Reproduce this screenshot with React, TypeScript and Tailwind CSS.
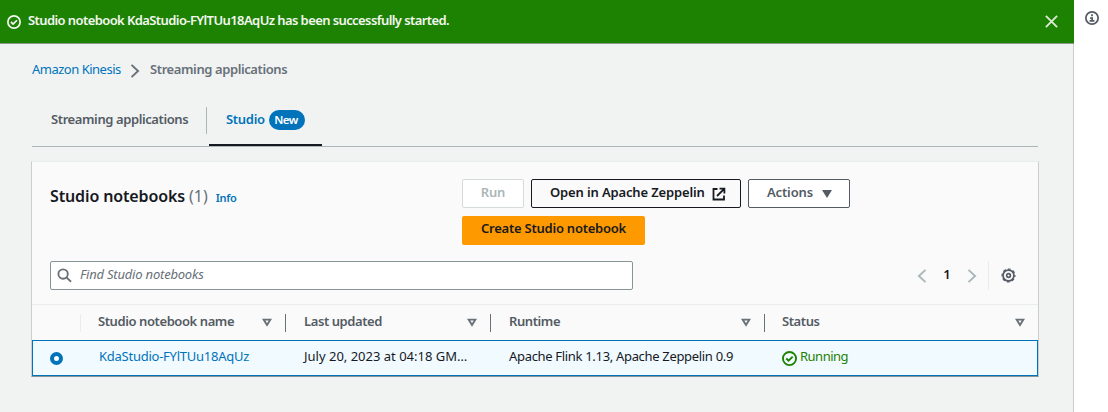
import type { ReactNode } from "react";

type IconProps = { className?: string };

function StatusIcon({ className = "" }: IconProps) {
  return (
    <svg viewBox="0 0 16 16" className={`fill-none stroke-current ${className}`} strokeWidth="2">
      <circle cx="8" cy="8" r="7" />
      <path d="M4.5 8l2.5 2.4 4.4-4.4" />
    </svg>
  );
}

function InfoIcon({ className = "" }: IconProps) {
  return (
    <svg viewBox="0 0 16 16" className={`fill-none stroke-current ${className}`} strokeWidth="2">
      <circle cx="8" cy="8" r="7" />
      <path d="M5.2 11.4h5.6M8.2 11.4V8H5.8M8 3.8v2.2" />
    </svg>
  );
}

function CloseIcon({ className = "" }: IconProps) {
  return (
    <svg viewBox="0 0 16 16" className={`fill-none stroke-current ${className}`} strokeWidth="2">
      <path d="M2 2l12 12M14 2L2 14" />
    </svg>
  );
}

function ChevronRight({ className = "" }: IconProps) {
  return (
    <svg viewBox="0 0 16 16" className={`fill-none stroke-current ${className}`} strokeWidth="2.2">
      <path d="M4 1l7.5 7L4 15" />
    </svg>
  );
}

function ChevronLeft({ className = "" }: IconProps) {
  return (
    <svg viewBox="0 0 16 16" className={`fill-none stroke-current ${className}`} strokeWidth="2.2">
      <path d="M12 1L4.5 8l7.5 7" />
    </svg>
  );
}

function SearchIcon({ className = "" }: IconProps) {
  return (
    <svg viewBox="0 0 16 16" className={`fill-none stroke-current ${className}`} strokeWidth="2">
      <circle cx="6.5" cy="6.5" r="5" />
      <path d="M10 10l5 4.6" />
    </svg>
  );
}

function ExternalIcon({ className = "" }: IconProps) {
  return (
    <svg viewBox="0 0 14 14" className={`fill-none stroke-current ${className}`} strokeWidth="1.8">
      <path d="M5.5 2H1.5v10.5H12V8.5M7.5 1.6h4.9v4.9M5 9l7.2-7.2" />
    </svg>
  );
}

function GearIcon({ className = "" }: IconProps) {
  return (
    <svg viewBox="0 0 16 16" className={`fill-none stroke-current ${className}`}>
      <circle cx="8" cy="8" r="5.8" strokeWidth="1.8" />
      <circle cx="8" cy="8" r="6.8" strokeWidth="1.4" strokeDasharray="3.1 2.24" strokeDashoffset="1.55" />
      <circle cx="8" cy="8" r="2" strokeWidth="1.8" />
    </svg>
  );
}

function SortIcon() {
  return (
    <svg viewBox="0 0 10 9" className="h-[9px] w-[10px] fill-none stroke-[#687078]" strokeWidth="1.9">
      <path d="M1.6 1.6h6.8L5 7z" />
    </svg>
  );
}

function HeaderCell({ className, children }: { className: string; children: ReactNode }) {
  return (
    <div className={`flex h-[18px] items-center justify-between pr-[13px] text-[#545b64] ${className}`}>
      <span className="mb-[3px] font-semibold tracking-[-0.41px]">{children}</span>
      <SortIcon />
    </div>
  );
}

export default function App() {
  return (
    <div className="flex h-[412px] w-[1108px] overflow-hidden bg-white font-['Noto_Sans','Open_Sans',sans-serif] text-[13px] leading-[18px] whitespace-nowrap text-[#16191f]">
      <div className="w-[1074px] border-r border-[#c8cdcd] bg-[#f1f3f3]">
        <div className="-mr-px flex h-[43px] items-center justify-between bg-[#1d8102] pr-[15px] pl-[7px] text-[#f2f8f0] shadow-[0_1px_0_0_#8c9a8c]">
          <div className="flex items-center">
            <StatusIcon className="h-[14px] w-[14px]" />
            <span className="mb-[3px] ml-[7px] font-semibold tracking-[-0.59px]">
              Studio notebook KdaStudio-FYlTUu18AqUz has been successfully started.
            </span>
          </div>
          <CloseIcon className="h-[15px] w-[15px] text-[#d9ead5]" />
        </div>

        <nav className="flex h-[53px] items-center pl-[32px]">
          <span className="mb-[2px] w-[90px] tracking-[-0.5px] text-[#0073bb]">Amazon Kinesis</span>
          <ChevronRight className="mt-[2px] mr-[8px] ml-[6px] h-[14px] w-[14px] text-[#687078]" />
          <span className="mb-[2px] font-semibold tracking-[-0.4px] text-[#687078]">Streaming applications</span>
        </nav>

        <div className="mx-[32px] mr-[35px] flex h-[51px] border-b border-[#aab7b8]">
          <div className="mt-[11px] flex h-[27px] w-[175px] items-center border-r border-[#aab7b8] pb-[3px] pl-[19px] font-semibold tracking-[-0.4px] text-[#545b64]">
            Streaming applications
          </div>
          <div className="ml-[2px] flex w-[113px] border-b-2 border-[#16191f] pt-[14px] pl-[17px]">
            <span className="w-[39px] font-semibold tracking-[-0.3px] text-[#0073bb]">Studio</span>
            <span className="ml-1 h-[20px] w-[36px] rounded-full bg-[#0073bb] pr-[2px] text-center text-[11.5px] leading-[19px] font-semibold tracking-[-0.5px] text-white">
              New
            </span>
          </div>
        </div>

        <section className="mt-[14px] ml-[31px] flex h-[216px] w-[1008px] flex-col border border-t-[#eaeded] border-r-[#c9cfd0] border-b-[#879596] border-l-[#c9cfd0] bg-[#fafafa]">
          <div className="flex h-[99px] shrink-0 pl-[18px]">
            <div className="flex w-[412px] items-baseline pt-[23px]">
              <h1 className="text-[16px] leading-[22px] font-semibold tracking-[-0.13px]">Studio notebooks</h1>
              <span className="ml-[4px] text-[16px] text-[#687078]">(1)</span>
              <span className="ml-[8px] text-[11px] font-semibold tracking-[-0.3px] text-[#0073bb]">Info</span>
            </div>
            <div className="flex w-[400px] flex-wrap content-start gap-x-[7px] gap-y-[8px] pt-[17px] font-semibold">
              <button className="h-[29px] w-[62px] rounded-[2px] border border-[#d5dbdb] bg-white pb-[3px] tracking-[-0.2px] text-[#aab7b8]">Run</button>
              <button className="flex h-[29px] w-[210px] items-center rounded-[2px] border border-[#16191f] bg-[#fafafa] pl-[18px]">
                <span className="mb-[3px] w-[162px] text-left tracking-[-0.14px]">Open in Apache Zeppelin</span>
                <ExternalIcon className="mt-px h-[14px] w-[14px]" />
              </button>
              <button className="flex h-[29px] w-[102px] items-center rounded-[2px] border border-[#545b64] bg-white pl-[18px] text-[#545b64]">
                <span className="mb-[3px] w-[55px] text-left tracking-[-0.14px]">Actions</span>
                <svg viewBox="0 0 10 8" className="mt-px h-[8px] w-[10px] fill-current">
                  <path d="M0 0h10L5 8z" />
                </svg>
              </button>
              <button className="h-[29px] w-[183px] rounded-[2px] bg-[#ff9900] pb-[5px] tracking-[-0.23px]">Create Studio notebook</button>
            </div>
          </div>

          <div className="flex h-[42px] shrink-0 items-start pr-[22px] pl-[18px]">
            <div className="flex h-[29px] w-[583px] items-center rounded-[2px] border border-[#879596] bg-white pl-[6px]">
              <SearchIcon className="h-[15px] w-[15px] text-[#687078]" />
              <span className="mb-[3px] ml-[8px] tracking-[-0.2px] text-[#687078] italic">Find Studio notebooks</span>
            </div>
            <div className="ml-auto flex h-[29px] items-center">
              <ChevronLeft className="h-[14px] w-[14px] text-[#aab7b8]" />
              <span className="mb-[4px] w-[36px] text-center font-semibold">1</span>
              <ChevronRight className="h-[14px] w-[14px] text-[#aab7b8]" />
              <div className="ml-[9px] h-full border-l border-[#eaeded]" />
              <GearIcon className="ml-[12px] h-[15px] w-[15px] text-[#545b64]" />
            </div>
          </div>

          <div className="mt-px flex h-[36px] shrink-0 items-center border-t border-[#eaeded]">
            <div className="h-[18px] w-[49px] border-r border-[#eaeded]" />
            <HeaderCell className="w-[205px] border-r border-[#687078] pl-[17px]">Studio notebook name</HeaderCell>
            <HeaderCell className="w-[205px] border-r border-[#687078] pl-[18px]">Last updated</HeaderCell>
            <HeaderCell className="w-[274px] border-r border-[#687078] pl-[18px]">Runtime</HeaderCell>
            <HeaderCell className="w-[273px] pl-[17px]">Status</HeaderCell>
          </div>

          <div className="flex h-[36px] shrink-0 items-center border border-[#0073bb] bg-[#f1faff]">
            <div className="flex w-[48px] pl-[17px]">
              <div className="mt-px h-[13px] w-[13px] rounded-full border-4 border-[#0073bb] bg-white" />
            </div>
            <div className="mb-[4px] w-[205px] pl-[18px] tracking-[-0.25px] text-[#0073bb]">KdaStudio-FYlTUu18AqUz</div>
            <div className="mb-[4px] w-[205px] pl-[18px]">July 20, 2023 at 04:18 GM…</div>
            <div className="mb-[4px] w-[274px] pl-[18px] tracking-[-0.32px]">Apache Flink 1.13, Apache Zeppelin 0.9</div>
            <div className="flex items-center pl-[17px] text-[#1d8102]">
              <StatusIcon className="h-[15px] w-[15px]" />
              <span className="mb-[4px] ml-[3px] tracking-[-0.5px]">Running</span>
            </div>
          </div>
        </section>
      </div>
      <aside className="pt-[11px] pl-[11px]">
        <InfoIcon className="h-[14px] w-[14px] text-[#545b64]" />
      </aside>
    </div>
  );
}
